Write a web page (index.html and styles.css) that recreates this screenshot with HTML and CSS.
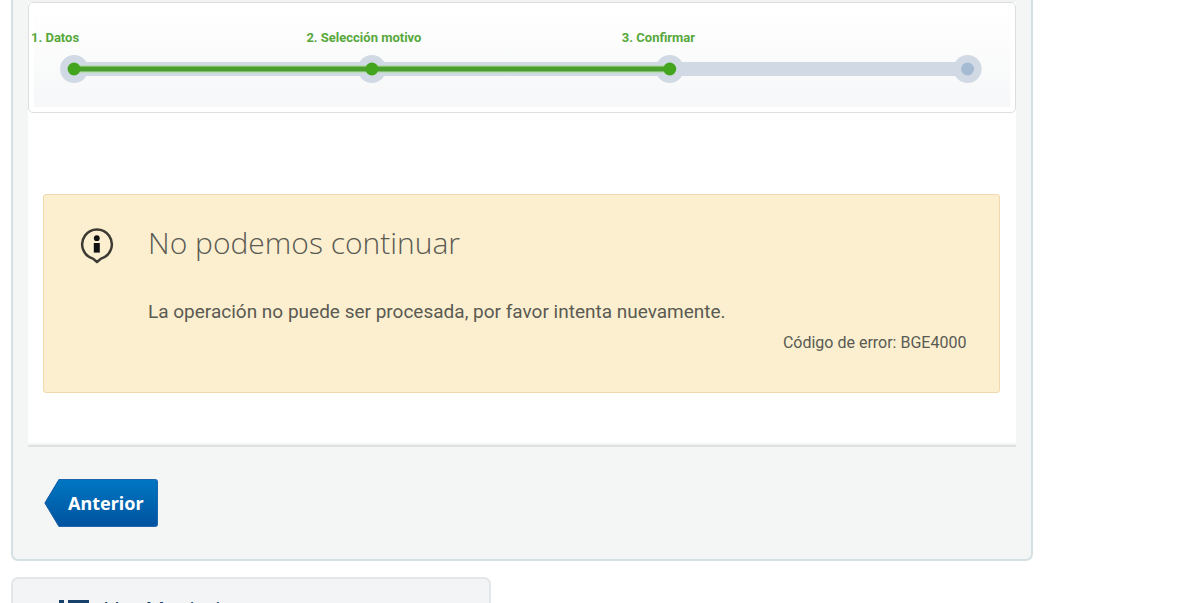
FILE: index.html
```html
<!DOCTYPE html>
<html lang="es">
<head>
<meta charset="utf-8">
<meta name="viewport" content="width=device-width, initial-scale=1">
<title>No podemos continuar</title>
<link rel="stylesheet" href="styles.css">
</head>
<body>
<main class="panel">
  <section class="content">
    <div class="wizard">
      <div class="wizard-inner">
        <ol class="labels">
          <li>1. Datos</li>
          <li>2. Selección motivo</li>
          <li>3. Confirmar</li>
        </ol>
        <svg class="track" viewBox="0 0 924 28" role="img" aria-label="Paso 3 de 4">
          <g fill="#d1dae4">
            <rect x="14" y="7" width="894" height="14"/>
            <circle cx="14" cy="14" r="14"/>
            <circle cx="312" cy="14" r="14"/>
            <circle cx="610" cy="14" r="14"/>
            <circle cx="908" cy="14" r="14"/>
          </g>
          <rect x="14" y="10" width="596" height="8" fill="#b9dcb6"/>
          <rect x="14" y="11.5" width="596" height="5" fill="#4a9f2d"/>
          <g fill="#43a51d">
            <circle cx="14" cy="14" r="6.5"/>
            <circle cx="312" cy="14" r="6.5"/>
            <circle cx="610" cy="14" r="6.5"/>
          </g>
          <circle cx="908" cy="14" r="6.5" fill="#a5bbd4"/>
        </svg>
      </div>
    </div>
    <div class="notice" role="alert">
      <svg class="notice-icon" viewBox="0 0 34 36" aria-hidden="true">
        <path d="M17 34 L13 30.6 A14.8 14.8 0 1 1 21 30.6 Z" fill="none" stroke="#3c3a33" stroke-width="2.5" stroke-linejoin="round"/>
        <circle cx="16.8" cy="10.2" r="2.9" fill="#111"/>
        <path d="M13.8 15h6v9.6h-6z" fill="#111"/>
      </svg>
      <div class="notice-body">
        <h1>No podemos continuar</h1>
        <p class="message">La operación no puede ser procesada, por favor intenta nuevamente.</p>
        <p class="code">Código de error: BGE4000</p>
      </div>
    </div>
  </section>
  <footer class="actions">
    <button class="back" type="button">
      <svg class="back-tip" viewBox="0 0 15 48" aria-hidden="true">
        <defs>
          <linearGradient id="tip" x1="0" y1="0" x2="0" y2="1">
            <stop offset="0" stop-color="#0076c2"/>
            <stop offset="1" stop-color="#00539f"/>
          </linearGradient>
        </defs>
        <path d="M15 0 L0.5 24 L15 48Z" fill="url(#tip)"/>
        <path d="M15 0.5 L1 24 L15 47.5" fill="none" stroke="#1b5fa3"/>
      </svg>
      <span>Anterior</span>
    </button>
  </footer>
</main>
<section class="card">
  <svg class="list-icon" viewBox="0 0 30 24" aria-hidden="true">
    <path d="M0 0h5v5H0zM9 0h21v5H9zM0 9h5v5H0zM9 9h21v5H9zM0 18h5v5H0zM9 18h21v5H9z" fill="#17406a"/>
  </svg>
  <h2>Ver Movimientos</h2>
</section>
</body>
</html>
```
FILE: styles.css
```css
* { box-sizing: border-box; }
body {
  margin: 0;
  height: 100vh;
  overflow: hidden;
  background: #fff;
  color: #5a5a52;
  font-family: Roboto, "Liberation Sans", sans-serif;
}
h1, h2, p, ol { margin: 0; padding: 0; }
.panel {
  width: 85.2%;
  margin-left: 11px;
  padding: 0 15px;
  border: 2px solid #d5e0e4;
  border-top: 0;
  border-radius: 0 0 7px 7px;
  background: #f4f6f6;
}
.content {
  padding: 2px 0 52px;
  background: linear-gradient(#f1f2f2 2px, #fff 2px);
  border-bottom: 2px solid #dfe1e1;
  box-shadow: inset 0 -2px #f3f5f5;
}
.wizard {
  padding: 5px;
  border: 1px solid #dcdedf;
  border-radius: 5px;
  background: #fff;
}
.wizard-inner {
  padding: 20px 0 24px;
  background: linear-gradient(#fff, #f6f7f8);
}
.labels {
  display: grid;
  grid-template-columns: 275fr 315fr 391fr;
  margin: 0 -3px;
  list-style: none;
  color: #57a83b;
  font-size: 13px;
  font-weight: 700;
  line-height: 20px;
}
.track { display: block; width: 94.6%; margin: 7px auto 0 26px; }
.notice {
  display: flex;
  align-items: flex-start;
  gap: 34px;
  margin: 81px 16px 0 15px;
  padding: 28px 33px 36px 36px;
  border: 1px solid #f0d9ac;
  border-radius: 3px;
  background: #fbefd0;
}
.notice-icon { flex: none; width: 34px; height: 36px; margin-top: 5px; }
.notice-body { flex: 1; }
h1 {
  font-family: "Open Sans", "Noto Sans", sans-serif;
  font-size: 30px;
  font-weight: 300;
  line-height: 40px;
}
.message { margin-top: 37px; font-size: 19px; line-height: 24px; }
.code { margin-top: 6px; font-size: 16px; line-height: 26px; text-align: right; }
.actions { padding: 32px 16px; }
.back {
  display: flex;
  padding: 0;
  border: 0;
  background: none;
  color: #fff;
  font: 700 18px/46px "Noto Sans", sans-serif;
}
.back-tip { width: 15px; height: 48px; }
.back span {
  padding: 0 14px 0 9px;
  border: 1px solid #1b66ab;
  border-left: 0;
  border-radius: 0 3px 3px 0;
  background: linear-gradient(#0076c2, #00539f);
}
.card {
  display: flex;
  align-items: flex-start;
  gap: 16px;
  width: 40%;
  margin: 16px 0 0 11px;
  padding: 21px 46px;
  border: 2px solid #e3e7ea;
  border-radius: 7px;
  background: #f3f4f6;
}
.list-icon { width: 30px; height: 24px; }
h2 {
  color: #17406a;
  font-family: "Open Sans", "Noto Sans", sans-serif;
  font-size: 22px;
  font-weight: 400;
  line-height: 18px;
}
```
